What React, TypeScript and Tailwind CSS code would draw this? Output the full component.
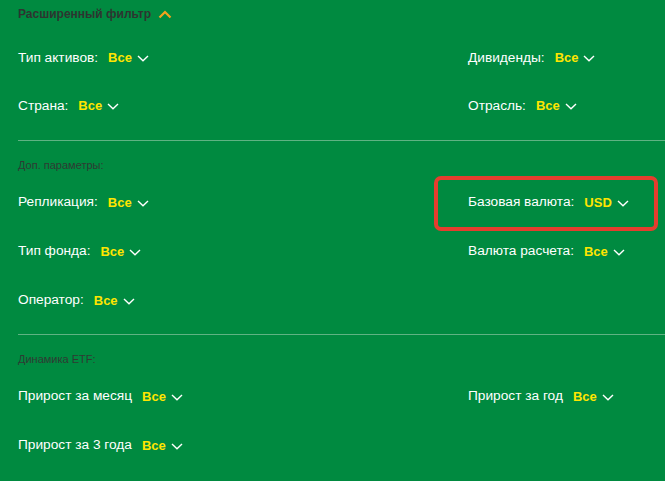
import React from 'react';

// Thin white chevron next to each value
const ChevronDown = () => (
  <svg width="12" height="7" viewBox="0 0 12 7" className="ml-[5px] mt-[2px]">
    <polyline points="1,1 6,5.8 11,1" fill="none" stroke="#ffffff" strokeWidth="1.4" />
  </svg>
);

const ChevronUp = () => (
  <svg width="14" height="9" viewBox="0 0 14 9" className="ml-[7px]">
    <polyline points="1.5,7.5 7,2 12.5,7.5" fill="none" stroke="#f5a21c" strokeWidth="2.2" />
  </svg>
);

type Filter = { label: string; value: string };

const FilterItem = ({ label, value }: Filter) => (
  <div className="flex items-center">
    <span className="text-white text-[13.7px]">{label}</span>
    <span className="ml-[10px] text-[#ffe500] text-[13px] font-bold">{value}</span>
    <ChevronDown />
  </div>
);

const Row = ({ left, right, tall = false }: { left: Filter; right?: Filter; tall?: boolean }) => (
  <div className={`grid grid-cols-[450px_1fr] items-center ${tall ? 'h-[49px]' : 'h-[48px]'}`}>
    <FilterItem {...left} />
    {right ? <FilterItem {...right} /> : <div />}
  </div>
);

const SectionLabel = ({ children }: { children: React.ReactNode }) => (
  <div className="h-[14px] flex items-center text-[11px] text-[#2f3a33]">{children}</div>
);

const Divider = () => <div className="h-px bg-[#5fb383] -mr-[18px]" />;

export default function App() {
  return (
    <div
      className="relative w-[665px] h-[481px] overflow-hidden bg-[#008a40] pl-[18px] pr-[18px]"
      style={{ fontFamily: '"Liberation Sans", Arial, sans-serif' }}
    >
      <div className="h-[28px] flex items-center">
        <span className="text-[12px] font-bold text-[#2d3530]">Расширенный фильтр</span>
        <ChevronUp />
      </div>

      <div className="mt-[6px]">
        <Row left={{ label: 'Тип активов:', value: 'Все' }} right={{ label: 'Дивиденды:', value: 'Все' }} />
        <Row left={{ label: 'Страна:', value: 'Все' }} right={{ label: 'Отрасль:', value: 'Все' }} />
      </div>

      <div className="mt-[10px]">
        <Divider />
      </div>

      <div className="mt-[17px]">
        <SectionLabel>Доп. параметры:</SectionLabel>
      </div>

      <div className="mt-[6px]">
        <Row tall left={{ label: 'Репликация:', value: 'Все' }} right={{ label: 'Базовая валюта:', value: 'USD' }} />
        <Row tall left={{ label: 'Тип фонда:', value: 'Все' }} right={{ label: 'Валюта расчета:', value: 'Все' }} />
        <Row tall left={{ label: 'Оператор:', value: 'Все' }} />
      </div>

      <div className="mt-[9px]">
        <Divider />
      </div>

      <div className="mt-[17px]">
        <SectionLabel>Динамика ETF:</SectionLabel>
      </div>

      <div className="mt-[6px]">
        <Row tall left={{ label: 'Прирост за месяц', value: 'Все' }} right={{ label: 'Прирост за год', value: 'Все' }} />
        <Row tall left={{ label: 'Прирост за 3 года', value: 'Все' }} />
      </div>

      {/* red highlight annotation */}
      <div className="absolute left-[434px] top-[176px] w-[224px] h-[55px] border-4 border-[#e63d2e] rounded-[7px] pointer-events-none" />
    </div>
  );
}
